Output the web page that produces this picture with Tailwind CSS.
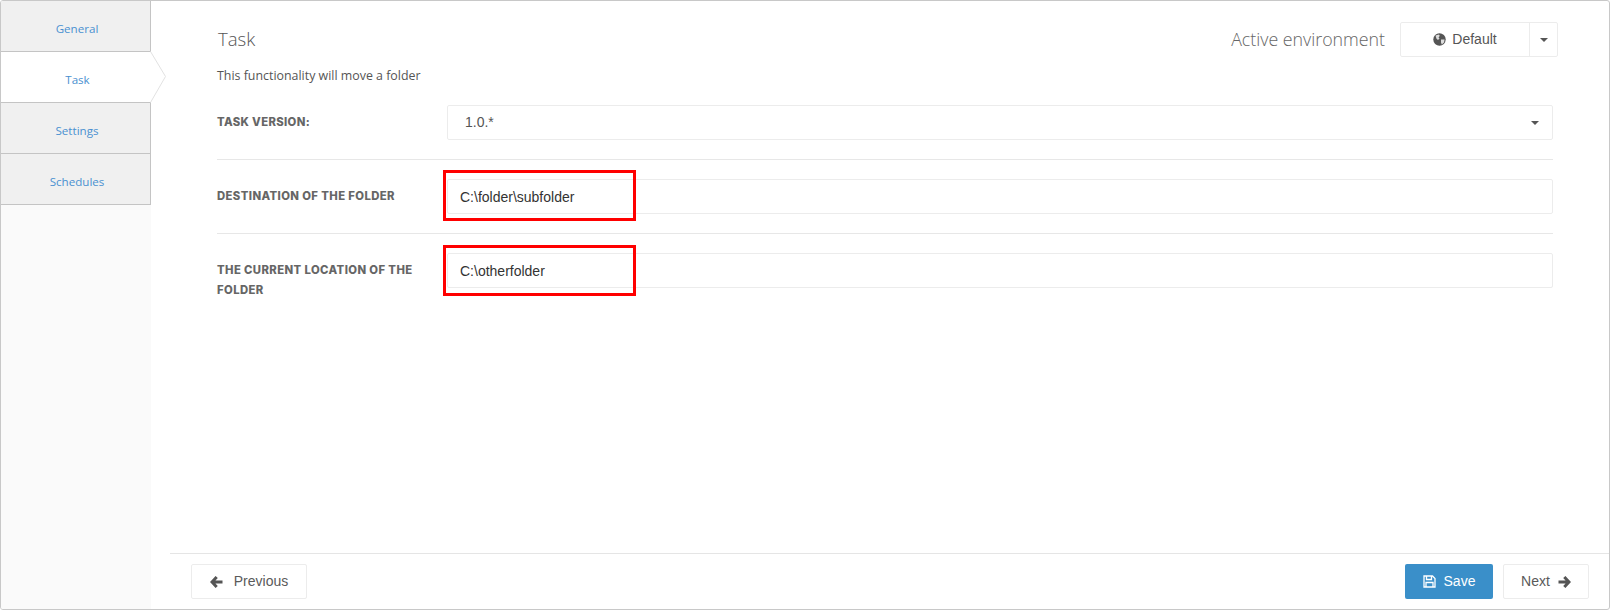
<!DOCTYPE html>
<html>
<head>
<meta charset="utf-8">
<script src="https://cdn.jsdelivr.net/npm/@tailwindcss/browser@4"></script>
</head>
<body class="bg-white">
<div class="relative w-[1610px] h-[610px] flex border border-[#c8c8c8] rounded-[3px] overflow-hidden bg-white font-['Open_Sans',sans-serif]">
  <nav class="w-[150px] shrink-0 bg-[#fafafa] text-[11.6px] text-[#4a90d0] text-center">
    <div class="h-[51px] flex items-center justify-center bg-[#f0f0f0] border-r border-b border-[#c4c4c4] pt-[5px] pl-[3px]">General</div>
    <div class="relative h-[51px] flex items-center justify-center bg-white border-b border-[#c4c4c4] pt-[5px] pl-[3px]">Task
      <svg class="absolute left-[149px] top-[-1px]" width="18" height="52" viewBox="0 0 18 52"><path d="M0.5 0.5L15.5 25.5L0.5 51.5" fill="#fff" stroke="#e2e2e2"/></svg>
    </div>
    <div class="h-[51px] flex items-center justify-center bg-[#f0f0f0] border-r border-b border-[#c4c4c4] pt-[5px] pl-[3px]">Settings</div>
    <div class="h-[51px] flex items-center justify-center bg-[#f0f0f0] border-r border-b border-[#c4c4c4] pt-[5px] pl-[3px]">Schedules</div>
  </nav>
  <main class="flex-1 min-w-0 flex flex-col">
    <div class="flex-1 pl-[66px] pr-[56px] pt-[21px]">
      <div class="flex items-center justify-between h-[35px]">
        <h1 class="text-[18.6px] font-light text-[#555] pl-[1px] pb-[2px]">Task</h1>
        <div class="flex items-center mr-[-5px]">
          <span class="text-[17.8px] font-light text-[#666] mr-[15px]">Active environment</span>
          <div class="flex h-[35px] border border-[#ececec] rounded-[2px] font-['Liberation_Sans',sans-serif] text-[14px] text-[#555]">
            <div class="w-[129px] flex items-center justify-center gap-[6px] border-r border-[#ececec]">
              <svg width="13" height="13" viewBox="0 0 13 13"><circle cx="6.5" cy="6.5" r="6.2" fill="#555"/><path d="M2.5 2.5L6 1.4L6.8 3L5.5 4.2L6.5 5.5L5 7L3.5 5.8ZM8 6.5L11.6 6.5L11 9.5L8.8 11.6L8 9.5Z" fill="#ddd"/></svg>
              <span>Default</span>
            </div>
            <div class="w-[27px] flex items-center justify-center"><div class="w-0 h-0 border-x-[4px] border-x-transparent border-t-[4px] border-t-[#555]"></div></div>
          </div>
        </div>
      </div>
      <p class="text-[12.4px] text-[#555] mt-[10px] leading-[17px]">This functionality will move a folder</p>
      <div class="flex items-center mt-[21px] pb-[19px] border-b border-[#e7e7e7]">
        <label class="w-[230px] shrink-0 font-['Inter',sans-serif] font-extrabold text-[11.3px] text-[#666] tracking-[0.35px]">TASK VERSION:</label>
        <div class="flex-1 h-[35px] border border-[#ececec] rounded-[2px] flex items-center justify-between pl-[17px] pr-[13px] font-['Liberation_Sans',sans-serif] text-[14px] text-[#555]">
          <span>1.0.*</span>
          <div class="w-0 h-0 border-x-[4px] border-x-transparent border-t-[4px] border-t-[#555]"></div>
        </div>
      </div>
      <div class="flex items-center pt-[19px] pb-[19px] border-b border-[#e7e7e7]">
        <label class="w-[230px] shrink-0 font-['Inter',sans-serif] font-extrabold text-[11.3px] text-[#666] tracking-[0.4px]">DESTINATION OF THE FOLDER</label>
        <div class="relative flex-1 h-[35px] border border-[#ececec] rounded-[2px] flex items-center pl-[12px] pt-[2px] font-['Liberation_Sans',sans-serif] text-[14px] text-[#333]">
          <span>C:\folder\subfolder</span>
          <div class="absolute left-[-5px] top-[-10px] w-[193px] h-[51px] border-[3px] border-[#ff0000]"></div>
        </div>
      </div>
      <div class="flex items-start pt-[19px]">
        <label class="w-[230px] pr-[14px] pt-[7px] shrink-0 font-['Inter',sans-serif] font-extrabold text-[11.3px] leading-[20px] text-[#666] tracking-[0.4px]">THE CURRENT LOCATION OF THE FOLDER</label>
        <div class="relative flex-1 h-[35px] border border-[#ececec] rounded-[2px] flex items-center pl-[12px] pt-[2px] font-['Liberation_Sans',sans-serif] text-[14px] text-[#333]">
          <span>C:\otherfolder</span>
          <div class="absolute left-[-5px] top-[-9px] w-[193px] h-[51px] border-[3px] border-[#ff0000]"></div>
        </div>
      </div>
    </div>
    <div class="ml-[19px] h-[56px] border-t border-[#e5e5e5] flex items-start justify-between pl-[21px] pr-[20px] pt-[10px] font-['Liberation_Sans',sans-serif] text-[14px]">
      <button class="w-[116px] h-[35px] border border-[#ececec] rounded-[2px] flex items-center justify-center gap-[11px] text-[#5a5a5a] bg-white">
        <svg width="13" height="12" viewBox="0 0 13 12"><path d="M6.7 1L2 6L6.7 11M2.2 6H12.5" fill="none" stroke="#555" stroke-width="3"/></svg>
        <span>Previous</span>
      </button>
      <div class="flex gap-[10px]">
        <button class="w-[88px] h-[35px] rounded-[2px] flex items-center justify-center gap-[8px] text-white bg-[#3a8fc9] font-medium">
          <svg width="13" height="13" viewBox="0 0 13 13"><path d="M1 1H9.5L12 3.5V12H1ZM3.5 1V4.5H8.5V1M3 12V7.5H10V12" fill="none" stroke="#fff" stroke-width="1.3"/></svg>
          <span>Save</span>
        </button>
        <button class="w-[86px] h-[35px] border border-[#ececec] rounded-[2px] flex items-center justify-center gap-[8px] text-[#5a5a5a] bg-white">
          <span>Next</span>
          <svg width="13" height="12" viewBox="0 0 13 12"><path d="M6.3 1L11 6L6.3 11M10.8 6H0.5" fill="none" stroke="#555" stroke-width="3"/></svg>
        </button>
      </div>
    </div>
  </main>
</div>
</body>
</html>
